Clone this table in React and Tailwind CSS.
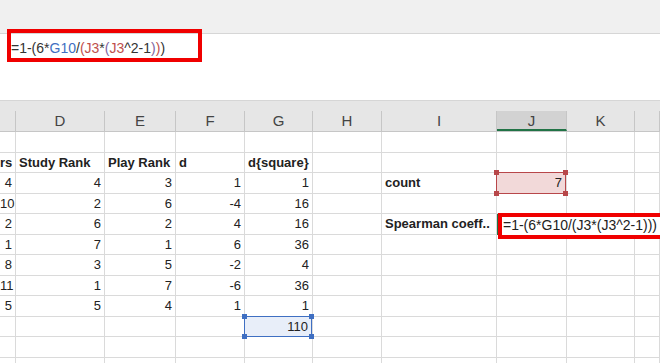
const cols = ['C', 'D', 'E', 'F', 'G', 'H', 'I', 'J', 'K', 'L'];
const widths = 'grid-cols-[16px_89px_71px_69px_68px_69px_115px_70px_68px_1fr]';

// rows of the sheet, columns C..L ; strings starting with "b:" are bold
const rows = [
    [],
    ['b:rs', 'b:Study Rank', 'b:Play Rank', 'b:d', 'b:d{square}'],
    ['4', '4', '3', '1', '1', '', 'b:count', 'count'],
    ['10', '2', '6', '-4', '16'],
    ['2', '6', '2', '4', '16', '', 'b:Spearman coeff..', 'formula'],
    ['1', '7', '1', '6', '36'],
    ['8', '3', '5', '-2', '4'],
    ['11', '1', '7', '-6', '36'],
    ['5', '5', '4', '1', '1'],
    ['', '', '', '', 'sum'],
    [],
    [],
];

function Formula() {
    return (
        <span className="text-[#333]">
            =1-(6*<span className="text-[#3f6fc2]">G10</span>/<span className="text-[#c0504d]">(J3</span>*<span className="text-[#8064a2]">(</span><span className="text-[#c0504d]">J3</span>^2-1<span className="text-[#8064a2]">)</span><span className="text-[#c0504d]">)</span>)
        </span>
    );
}

function Handles({ color }) {
    return (
        <>
            <span className={`absolute -left-[3px] -top-[3px] w-[5px] h-[5px] ${color}`} />
            <span className={`absolute -right-[3px] -top-[3px] w-[5px] h-[5px] ${color}`} />
            <span className={`absolute -left-[3px] -bottom-[3px] w-[5px] h-[5px] ${color}`} />
            <span className={`absolute -right-[3px] -bottom-[3px] w-[5px] h-[5px] ${color}`} />
        </>
    );
}

// range highlight drawn over a cell while editing the formula
function RefBox({ children, bg, border, handle }) {
    return (
        <div className="h-[20.5px] border-r border-b border-[#dadada] text-[13px] leading-[20px]">
            <div className={`relative -mt-px -ml-px h-[21.5px] border-[1.5px] ${bg} ${border} text-right pr-[3px] text-[#222]`}>
                {children}
                <Handles color={handle} />
            </div>
        </div>
    );
}

function Cell({ value, col }) {
    const base = 'h-[20.5px] border-r border-b border-[#dadada] leading-[20px] text-[13px] whitespace-nowrap';
    if (value === 'count') {
        return <RefBox bg="bg-[#f2d9d9]" border="border-[#b8474a]" handle="bg-[#b8474a]">7</RefBox>;
    }
    if (value === 'sum') {
        return <RefBox bg="bg-[#e8eef9]" border="border-[#3f6fc2]" handle="bg-[#3f6fc2]">110</RefBox>;
    }
    if (value === 'formula') {
        return (
            <div className={`${base} col-span-3 relative text-[14px]`}>
                <div className="absolute left-0 top-0 w-[70px] h-[21px] border-l-2 border-b-2 border-[#217346]" />
                <div className="absolute left-[1px] -top-[1px] -right-[20px] h-[26px] border-4 border-[#f00000] bg-white pl-[1px] leading-[17px] text-[#222]">
                    =1-(6*G10/(J3*(J3^2-1)))
                </div>
            </div>
        );
    }
    const bold = value && value.startsWith('b:');
    const text = bold ? value.slice(2) : value;
    const right = !bold || col === 0;
    return (
        <div className={`${base} overflow-hidden text-[#222] ${bold ? 'font-bold' : ''} ${right ? 'text-right pr-[3px]' : 'pl-[3px]'}`}>
            {text}
        </div>
    );
}

export default function App() {
    return (
        <div className="w-[660px] h-[363px] overflow-hidden bg-white font-['Liberation_Sans',Arial,sans-serif]">
            {/* ribbon strip */}
            <div className="h-[34px] bg-[#f0f0f0] border-b border-[#d6d6d6]" />

            {/* formula bar with the red call-out */}
            <div className="flex items-start h-[67px] bg-white border-b border-[#d6d6d6] pl-[7px] text-[14px] leading-[18px]">
                <div className="relative -mt-[5px] w-[195px] h-[33px] border-4 border-[#f00000] pt-[6px]">
                    <Formula />
                </div>
            </div>

            {/* column headers */}
            <div className={`grid ${widths} h-[31px] bg-[#e6e6e6] border-b border-[#c6c6c6] pt-[10px]`}>
                {cols.map((c) => (
                    <div
                        key={c}
                        className={`h-[20px] border-r border-[#c6c6c6] text-center text-[15px] leading-[20px] text-[#444] ${c === 'J' ? 'bg-[#d2d2d2] border-b-2 border-b-[#217346]' : ''}`}
                    >
                        {c === 'C' || c === 'L' ? '' : c}
                    </div>
                ))}
            </div>

            {/* sheet */}
            <div className={`grid ${widths}`}>
                {rows.map((r, i) => {
                    const cells = [];
                    for (let c = 0; c < cols.length; c++) {
                        const v = r[c] || '';
                        cells.push(<Cell key={`${i}-${c}`} value={v} col={c} />);
                        if (v === 'formula') c += 2;
                    }
                    return cells;
                })}
            </div>
        </div>
    );
}
